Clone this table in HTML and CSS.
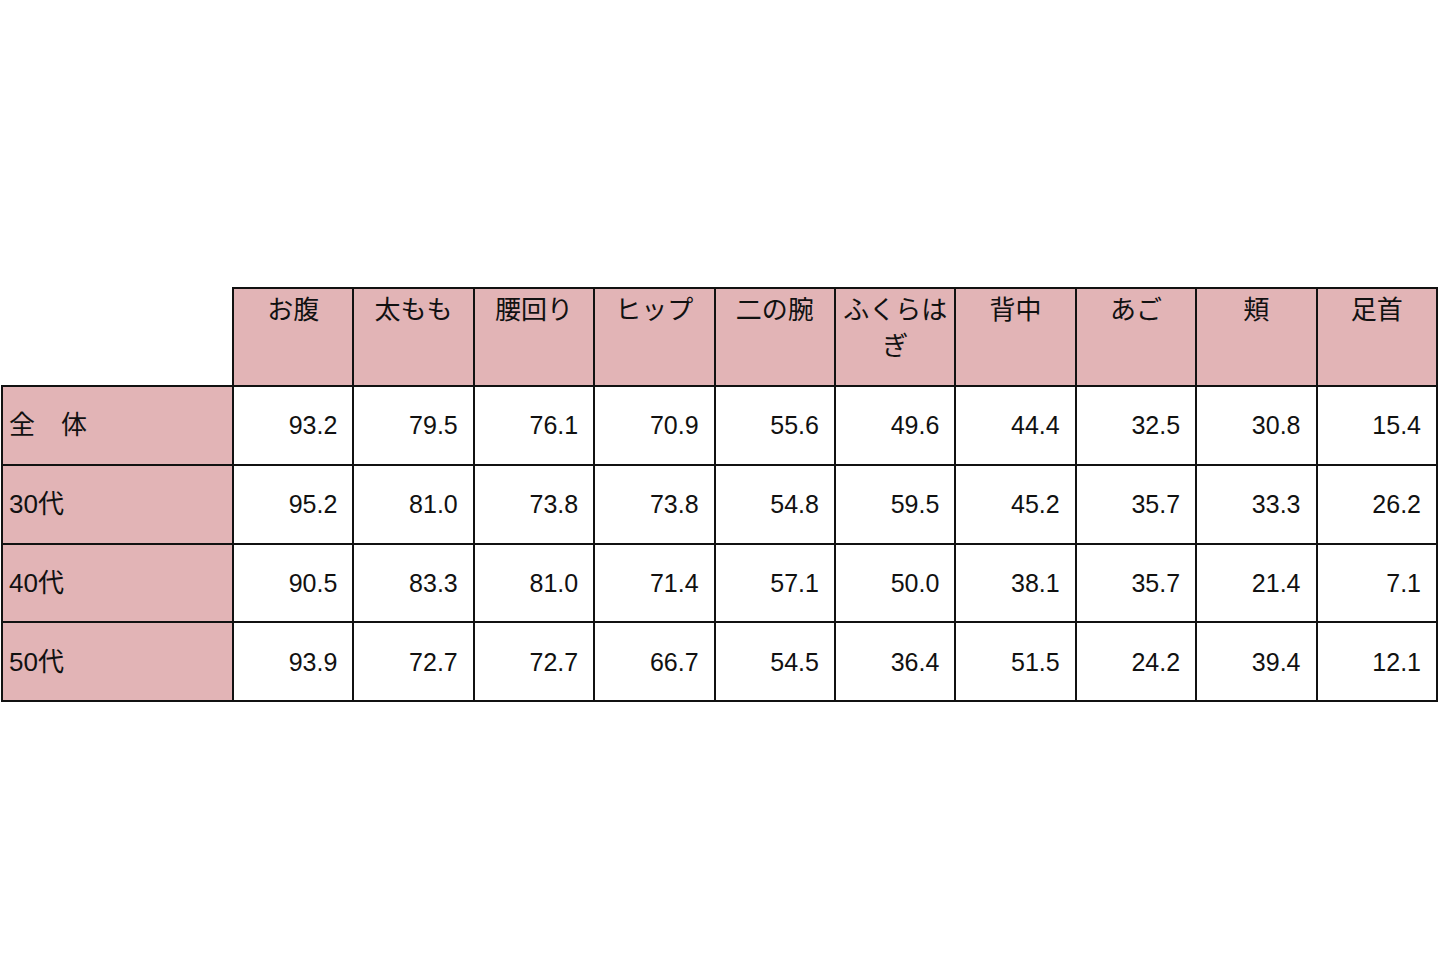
FILE: index.html
```html
<!DOCTYPE html>
<html lang="ja">
<head>
<meta charset="utf-8">
<link rel="stylesheet" href="styles.css">
</head>
<body>
<table class="data">
  <colgroup>
    <col class="c-label">
    <col class="c-val"><col class="c-val"><col class="c-val"><col class="c-val"><col class="c-val">
    <col class="c-val"><col class="c-val"><col class="c-val"><col class="c-val"><col class="c-val">
  </colgroup>
  <thead>
    <tr class="head">
      <th class="corner"></th>
      <th>お腹</th><th>太もも</th><th>腰回り</th><th>ヒップ</th><th>二の腕</th>
      <th>ふくらは<br>ぎ</th><th>背中</th><th>あご</th><th>頬</th><th>足首</th>
    </tr>
  </thead>
  <tbody>
    <tr><th class="rowh">全　体</th><td>93.2</td><td>79.5</td><td>76.1</td><td>70.9</td><td>55.6</td><td>49.6</td><td>44.4</td><td>32.5</td><td>30.8</td><td>15.4</td></tr>
    <tr><th class="rowh">30代</th><td>95.2</td><td>81.0</td><td>73.8</td><td>73.8</td><td>54.8</td><td>59.5</td><td>45.2</td><td>35.7</td><td>33.3</td><td>26.2</td></tr>
    <tr><th class="rowh">40代</th><td>90.5</td><td>83.3</td><td>81.0</td><td>71.4</td><td>57.1</td><td>50.0</td><td>38.1</td><td>35.7</td><td>21.4</td><td>7.1</td></tr>
    <tr><th class="rowh">50代</th><td>93.9</td><td>72.7</td><td>72.7</td><td>66.7</td><td>54.5</td><td>36.4</td><td>51.5</td><td>24.2</td><td>39.4</td><td>12.1</td></tr>
  </tbody>
</table>
</body>
</html>
```
FILE: styles.css
```css
html, body {
  margin: 0;
  background: #ffffff;
}
body {
  padding: 287px 0 0 1px;
  font-family: "Liberation Sans", "Noto Sans CJK JP", sans-serif;
  color: #111111;
}
.data {
  border-collapse: collapse;
  table-layout: fixed;
  width: 1437px;
}
.c-label { width: 231px; }
.c-val { width: 120.4px; }
.data th, .data td {
  border: 2px solid #111111;
  padding: 0;
  font-weight: normal;
  font-size: 25px;
  line-height: 34px;
}
.head th {
  background: #e2b4b6;
  height: 95px;
  vertical-align: top;
  text-align: center;
  padding-top: 1px;
  font-family: "Noto Sans CJK JP", sans-serif;
  font-size: 26px;
  line-height: 36px;
}
.head th.corner {
  background: transparent;
  border: none;
}
.rowh {
  background: #e2b4b6;
  text-align: left;
  padding-left: 6px !important;
  height: 76.75px;
  font-family: "Liberation Sans", "Noto Sans CJK JP", sans-serif;
  font-size: 26px !important;
}
.data td {
  text-align: right;
  padding-right: 15px;
  background: #ffffff;
  height: 76.75px;
}
```
